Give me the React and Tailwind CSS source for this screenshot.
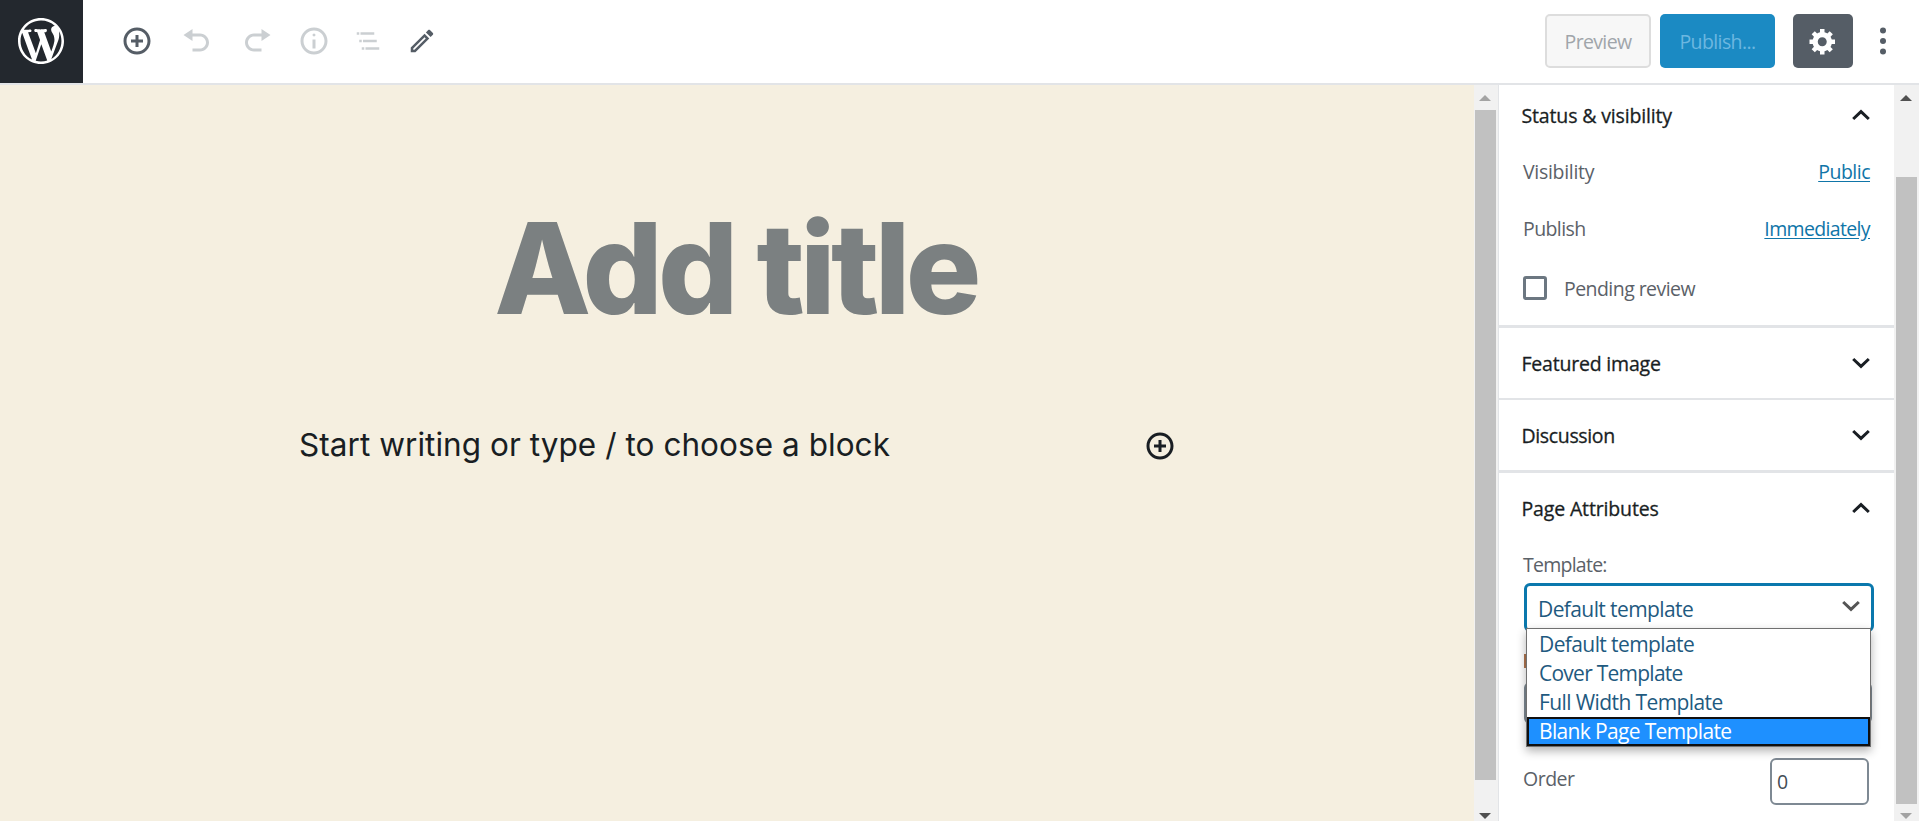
import React from "react";

const paths = {
  insert: "M10 1c-5 0-9 4-9 9s4 9 9 9 9-4 9-9-4-9-9-9zm0 16c-3.9 0-7-3.1-7-7s3.1-7 7-7 7 3.1 7 7-3.1 7-7 7zm1-11H9v3H6v2h3v3h2v-3h3V9h-3V6z",
  undo: "M12 5H7V2L1 6l6 4V7h5c2.2 0 4 1.8 4 4s-1.8 4-4 4H7v2h5c3.3 0 6-2.7 6-6s-2.7-6-6-6z",
  redo: "M8 5h5V2l6 4-6 4V7H8c-2.2 0-4 1.8-4 4s1.8 4 4 4h5v2H8c-3.3 0-6-2.7-6-6s2.7-6 6-6z",
  info: "M9 15h2V9H9v6zm1-10c-.5 0-1 .5-1 1s.5 1 1 1 1-.5 1-1-.5-1-1-1zm0-4c-5 0-9 4-9 9s4 9 9 9 9-4 9-9-4-9-9-9zm0 16c-3.9 0-7-3.1-7-7s3.1-7 7-7 7 3.1 7 7-3.1 7-7 7z",
  outline: "M5 5H3v2h2V5zm3 8h11v-2H8v2zm9-8H6v2h11V5zM7 11H5v2h2v-2zm0 8h2v-2H7v2zm3-2v2h11v-2H10z",
  pencil: "M14.06 9.02l.92.92L5.92 19H5v-.92l9.06-9.06M17.66 3c-.25 0-.51.1-.7.29l-1.83 1.83 3.75 3.75 1.83-1.83c.39-.39.39-1.02 0-1.41l-2.34-2.34c-.2-.2-.45-.29-.71-.29zm-3.6 3.19L3 17.25V21h3.75L17.81 9.94l-3.75-3.75z",
  gear: "M18 12h-2.18c-.17.7-.44 1.35-.81 1.93l1.54 1.54-2.1 2.1-1.54-1.54c-.58.36-1.23.63-1.91.79V19H8v-2.18c-.68-.16-1.33-.43-1.91-.79l-1.54 1.54-2.12-2.12 1.54-1.54c-.36-.58-.63-1.23-.79-1.91H1V9.03h2.17c.16-.7.44-1.35.8-1.94L2.43 5.55l2.1-2.1 1.54 1.54c.58-.37 1.24-.64 1.93-.81V2h3v2.18c.68.16 1.33.43 1.91.79l1.54-1.54 2.12 2.12-1.54 1.54c.36.59.64 1.24.8 1.94H18V12zm-8.5 1.5c1.66 0 3-1.34 3-3s-1.34-3-3-3-3 1.34-3 3 1.34 3 3 3z",
  wordpress: "M20 10c0-5.51-4.49-10-10-10C4.48 0 0 4.49 0 10c0 5.52 4.48 10 10 10 5.51 0 10-4.48 10-10zM7.78 15.37L4.37 6.22c.55-.02 1.17-.08 1.17-.08.5-.06.44-1.13-.06-1.11 0 0-1.45.11-2.37.11-.18 0-.37 0-.58-.01C4.12 2.69 6.87 1.11 10 1.11c2.33 0 4.45.87 6.05 2.34-.68-.11-1.65.39-1.65 1.58 0 .74.45 1.36.9 2.1.35.61.55 1.36.55 2.46 0 1.49-1.4 5-1.4 5l-3.03-8.37c.54-.02.82-.17.82-.17.5-.05.44-1.25-.06-1.22 0 0-1.44.12-2.38.12-.87 0-2.33-.12-2.33-.12-.5-.03-.56 1.2-.06 1.22l.92.08 1.26 3.41zM17.41 10c.24-.64.74-1.87.43-4.25.7 1.29 1.05 2.71 1.05 4.25 0 3.29-1.73 6.24-4.4 7.78.97-2.59 1.94-5.2 2.92-7.78zM6.1 18.09C3.12 16.65 1.11 13.53 1.11 10c0-1.3.23-2.48.72-3.59C3.25 10.3 4.67 14.2 6.1 18.09zm4.03-6.63l2.58 6.98c-.86.29-1.76.45-2.71.45-.79 0-1.57-.11-2.29-.33.81-2.38 1.62-4.74 2.42-7.1z",
};

function Icon({ name, box = 20, className = "size-[30px]" }) {
  return (
    <svg viewBox={`0 0 ${box} ${box}`} className={`shrink-0 ${className}`} fill="currentColor" aria-hidden="true">
      <path d={paths[name]} />
    </svg>
  );
}

function Chevron({ up = false, className = "" }) {
  return (
    <svg viewBox="0 0 18 12" className={`h-3 w-[18px] shrink-0 ${className}`} fill="none" stroke="currentColor" strokeWidth="3" aria-hidden="true">
      <path d={up ? "M1.2 10L9 2.6L16.8 10" : "M1.2 2L9 9.4L16.8 2"} />
    </svg>
  );
}

function Arrow({ up = false, className }) {
  return (
    <svg viewBox="0 0 12 6" className={`h-1.5 w-3 ${className}`} fill="currentColor" aria-hidden="true">
      <path d={up ? "M0 6L6 0L12 6Z" : "M0 0L12 0L6 6Z"} />
    </svg>
  );
}

function PanelTitle({ children, open, className, text = "" }) {
  return (
    <button className={`flex w-full items-center justify-between pl-[22.5px] pr-6 font-medium text-[#191e23] [-webkit-text-stroke:0.3px_#191e23] ${className}`}>
      <span className={`pt-px ${text}`}>{children}</span>
      <Chevron up={open} className="mb-px" />
    </button>
  );
}

function Header() {
  return (
    <header className="flex h-[85px] shrink-0 items-start border-b-2 border-[#e2e4e7] bg-white">
      <div className="flex h-[83px] w-[83px] items-center justify-center bg-[#23282e] pr-0.5 pb-px text-white">
        <Icon name="wordpress" className="size-[46px]" />
      </div>
      <div className="flex h-[82px] flex-1 items-center pl-[39px] text-[#cbcfd2]">
        <Icon name="insert" className="size-[30px] text-[#555d66]" />
        <Icon name="undo" className="ml-[30px] size-[30px]" />
        <Icon name="redo" className="ml-[30px] size-[30px]" />
        <Icon name="info" className="ml-[27px] size-[30px]" />
        <Icon name="outline" box={24} className="ml-[24px] size-[30px]" />
        <Icon name="pencil" box={24} className="ml-[24px] size-[30px] text-[#555d66]" />
      </div>
      <div className="flex h-[82px] items-center pr-[33px]">
        <button className="flex h-[54px] w-[106px] items-center justify-center rounded-[5px] border-2 border-[#dddddd] bg-[#f7f7f7] text-[#a0a5aa]">
          <span className="pt-0.5 tracking-[-0.65px]">Preview</span>
        </button>
        <button className="ml-[9px] flex h-[54px] w-[115px] items-center justify-center rounded-[5px] bg-[#1b8ac3] text-[#6cb7e0]">
          <span className="pt-0.5 tracking-[-0.6px]">Publish...</span>
        </button>
        <button className="ml-[18px] flex h-[54px] w-[60px] items-center justify-center rounded-[5px] bg-[#555d66] text-white">
          <Icon name="gear" />
        </button>
        <svg viewBox="0 0 6 28" className="ml-[27px] h-7 w-1.5" fill="#555d66" aria-hidden="true">
          <circle cx="3" cy="3.4" r="3" />
          <circle cx="3" cy="14" r="3" />
          <circle cx="3" cy="24.6" r="3" />
        </svg>
      </div>
    </header>
  );
}

function Editor() {
  return (
    <main className="min-w-0 flex-1 bg-[#f5efe0] pt-[120px] font-['Inter',sans-serif]">
      <h1 className="pr-[3px] text-center text-[126px] leading-[126px] font-extrabold tracking-[-4.7px] text-[#7b8081]">Add title</h1>
      <div className="flex items-center justify-between pt-[92px] pl-[299px] pr-[299px] text-[#191e23]">
        <p className="pb-0.5 text-[31.5px] leading-[44px] font-normal tracking-[0.05px]">Start writing or type / to choose a block</p>
        <Icon name="insert" />
      </div>
    </main>
  );
}

function Options() {
  return (
    <ul className="absolute top-[42px] -left-px h-[119px] w-[345px] border border-[#707070] bg-white pt-px text-[21px] leading-[29px] text-[#1f5a80] shadow-[0_4px_9px_rgba(0,0,0,0.3)]">
      <li className="pl-3 tracking-[-0.6px]">Default template</li>
      <li className="pl-3 tracking-[-0.75px]">Cover Template</li>
      <li className="pl-3 tracking-[-0.6px]">Full Width Template</li>
      <li className="h-[29px] border-2 border-[#101010] bg-[#1e90ff] pl-2.5 leading-[25px] tracking-[-0.65px] text-white">Blank Page Template</li>
    </ul>
  );
}

function Sidebar() {
  return (
    <aside className="w-[396px] shrink-0 overflow-hidden border-l border-[#e2e4e7] bg-white text-[#5b6168]">
      <section className="h-[243px] border-b-[3px] border-[#e2e4e7]">
        <PanelTitle open className="h-[58px] pt-[3px]" text="tracking-[-0.15px]">Status &amp; visibility</PanelTitle>
        <div className="flex h-[57px] items-center justify-between pr-6 pl-6">
          <span className="tracking-[-0.3px]">Visibility</span>
          <a className="tracking-[-0.5px] text-[#0f75a8] underline underline-offset-2">Public</a>
        </div>
        <div className="flex h-[57px] items-center justify-between pr-6 pl-6">
          <span className="tracking-[-0.6px]">Publish</span>
          <a className="tracking-[-0.65px] text-[#0f75a8] underline underline-offset-2">Immediately</a>
        </div>
        <label className="flex h-[62px] items-center pl-6">
          <span className="size-6 rounded-[3px] border-[3px] border-[#6c7781] bg-white" />
          <span className="ml-[17px] pt-0.5 tracking-[-0.55px]">Pending review</span>
        </label>
      </section>
      <section className="border-b-2 border-[#e2e4e7]">
        <PanelTitle className="h-[70px] pt-px" text="tracking-[-0.2px]">Featured image</PanelTitle>
      </section>
      <section className="border-b-[3px] border-[#e2e4e7]">
        <PanelTitle className="h-[70px] pt-px" text="tracking-[-0.35px]">Discussion</PanelTitle>
      </section>
      <section>
        <PanelTitle open className="h-[71px]" text="tracking-[-0.15px]">Page Attributes</PanelTitle>
        <div className="flex h-[39px] items-center pt-0.5 pl-6 tracking-[-0.75px]">Template:</div>
        <div className="relative z-10 ml-[25px] flex h-[49px] w-[350px] items-center justify-between rounded-md border-[3px] border-[#0a78ad] pr-[11px] pl-[11px] text-[21px] text-[#1f5a80]">
          <span className="pt-1 tracking-[-0.6px]">Default template</span>
          <Chevron className="mb-1 text-[#555555]" />
          <Options />
        </div>
        <div className="ml-[25px] mt-[22px] h-3.5 w-0.5 bg-[#b0764f]" />
        <div className="ml-[25px] mt-3.5 h-[42px] w-[348px] rounded-md border-2 border-[#7e8993]" />
        <div className="mt-[34px] flex h-[47px] items-center justify-between pr-[25px] pl-6">
          <span className="pb-1.5 tracking-[-0.5px]">Order</span>
          <div className="flex h-[47px] w-[99px] items-center rounded-md border-2 border-[#7e8993] pl-[5px] text-[#444c54]">0</div>
        </div>
      </section>
    </aside>
  );
}

export default function App() {
  return (
    <div className="flex h-[821px] w-[1919px] flex-col overflow-hidden bg-white font-['Open_Sans','Noto_Sans',sans-serif] text-[19.5px]">
      <Header />
      <div className="flex min-h-0 flex-1">
        <Editor />
        <div className="flex w-6 shrink-0 flex-col bg-[#f1f1f1] pl-px">
          <Arrow up className="mt-[10px] ml-[4px] text-[#a3a3a3]" />
          <div className="mt-[9px] h-[670px] w-[21px] bg-[#c1c1c1]" />
          <Arrow className="mt-[33px] ml-[4px] text-[#505050]" />
        </div>
        <Sidebar />
        <div className="flex w-[25px] shrink-0 flex-col bg-[#f1f1f1] pl-0.5">
          <Arrow up className="mt-[10px] ml-[4px] text-[#505050]" />
          <div className="mt-[76px] h-[627px] w-[21px] bg-[#c1c1c1]" />
          <Arrow className="mt-[9px] ml-[4px] text-[#a3a3a3]" />
        </div>
      </div>
    </div>
  );
}
